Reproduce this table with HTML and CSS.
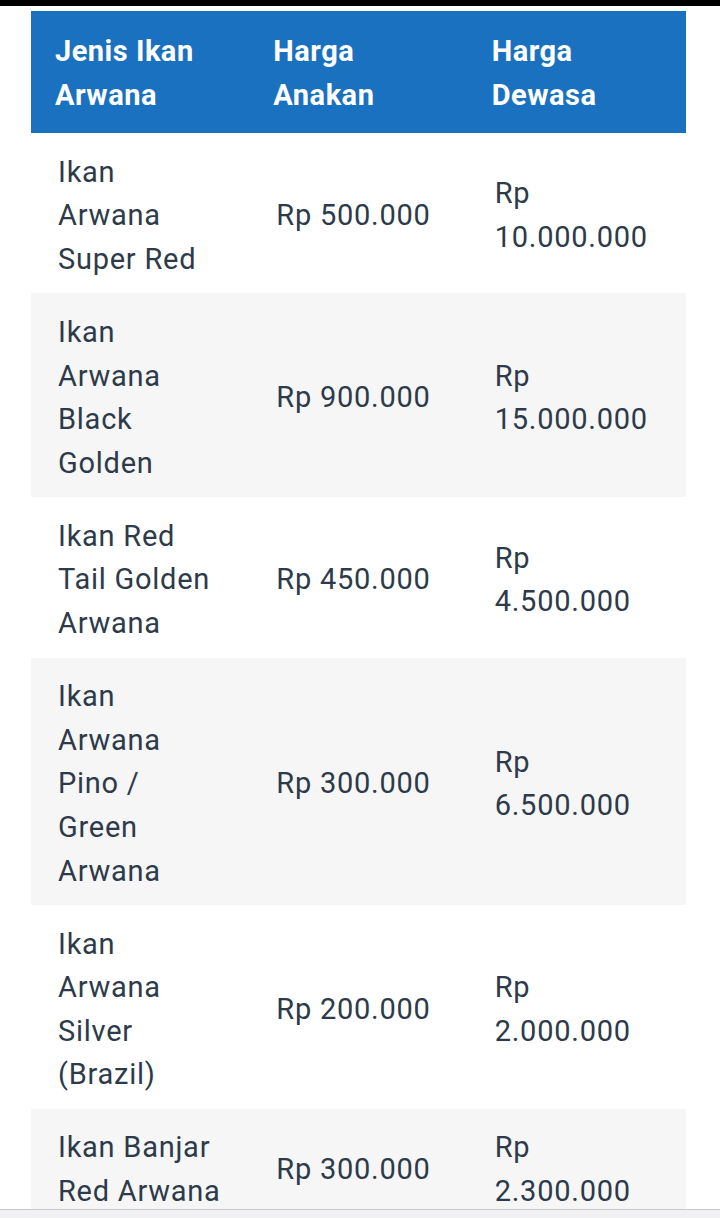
FILE: index.html
```html
<!DOCTYPE html>
<html lang="id">
<head>
<meta charset="utf-8">
<title>Harga Ikan Arwana</title>
<link rel="stylesheet" href="styles.css">
</head>
<body>
<div class="topbar"></div>
<main class="page">
  <table class="price-table">
    <thead>
      <tr>
        <th>Jenis Ikan Arwana</th>
        <th>Harga Anakan</th>
        <th>Harga Dewasa</th>
      </tr>
    </thead>
    <tbody>
      <tr>
        <td>Ikan Arwana Super Red</td>
        <td>Rp 500.000</td>
        <td>Rp 10.000.000</td>
      </tr>
      <tr>
        <td>Ikan Arwana Black Golden</td>
        <td>Rp 900.000</td>
        <td>Rp 15.000.000</td>
      </tr>
      <tr>
        <td>Ikan Red Tail Golden Arwana</td>
        <td>Rp 450.000</td>
        <td>Rp 4.500.000</td>
      </tr>
      <tr>
        <td>Ikan Arwana Pino / Green Arwana</td>
        <td>Rp 300.000</td>
        <td>Rp 6.500.000</td>
      </tr>
      <tr>
        <td>Ikan Arwana Silver (Brazil)</td>
        <td>Rp 200.000</td>
        <td>Rp 2.000.000</td>
      </tr>
      <tr>
        <td>Ikan Banjar Red Arwana</td>
        <td>Rp 300.000</td>
        <td>Rp 2.300.000</td>
      </tr>
    </tbody>
  </table>
</main>
<div class="bottombar"></div>
</body>
</html>
```
FILE: styles.css
```css
html, body {
  margin: 0;
  padding: 0;
  background: #ffffff;
}
body {
  font-family: Roboto, "Noto Sans", "Liberation Sans", sans-serif;
  color: #2d3a4a;
}
.topbar {
  position: fixed;
  top: 0;
  left: 0;
  right: 0;
  height: 6px;
  background: #000000;
  z-index: 2;
}
.page {
  padding: 11px 34px 40px 31px;
}
.price-table {
  width: 655px;
  border-collapse: collapse;
  table-layout: fixed;
  font-size: 29px;
  line-height: 43.6px;
  letter-spacing: 0.75px;
}
.price-table th,
.price-table td {
  text-align: left;
  vertical-align: middle;
  padding: 17.5px 25px 12px 27px;
}
.price-table th {
  background: #1a71bf;
  color: #ffffff;
  font-weight: 700;
  padding: 19px 27px 16px 24px;
  letter-spacing: 0.5px;
}
.price-table tbody tr:nth-child(even) td {
  background: #f6f6f6;
}
.bottombar {
  position: fixed;
  left: 0;
  right: 0;
  bottom: 0;
  height: 8px;
  background: #f1f1f3;
  border-top: 1px solid #c9c9cc;
  z-index: 2;
}
```
